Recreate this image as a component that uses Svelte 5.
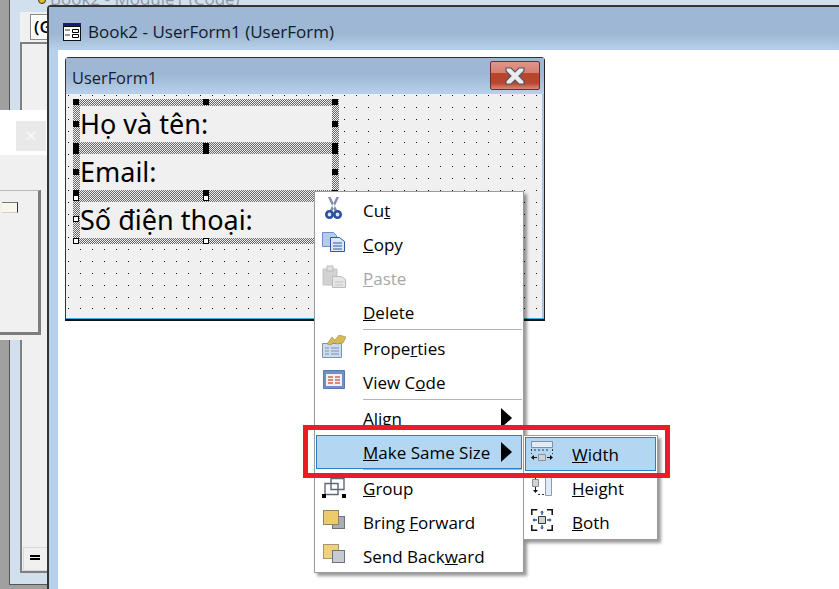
<script>
    const menuFont = 17;
    const dotRows = Array.from({ length: 19 }, (_, i) => Math.round(i * 11.86));

    // selection handles on the three labels, last selected one is hollow
    const handles = [
        [73, 99, 0], [203, 99, 0], [332, 99, 0],
        [73, 121, 0], [332, 121, 0],
        [73, 143, 0], [203, 143, 0], [332, 143, 0],
        [73, 148, 0], [203, 148, 0], [332, 148, 0],
        [73, 169, 0], [332, 169, 0],
        [73, 190, 0], [203, 190, 0], [332, 190, 0],
        [73, 195, 1], [203, 195, 1],
        [73, 216, 1],
        [73, 238, 1], [203, 238, 1]
    ];

    const topItems = [
        { icon: 'cut', before: 'Cu', key: 't', after: '' },
        { icon: 'copy', before: '', key: 'C', after: 'opy' },
        { icon: 'paste', before: '', key: 'P', after: 'aste', off: true },
        { icon: '', before: '', key: 'D', after: 'elete' }
    ];
    const midItems = [
        { icon: 'props', before: 'Prope', key: 'r', after: 'ties' },
        { icon: 'code', before: 'View C', key: 'o', after: 'de' }
    ];
    const lowItems = [
        { icon: 'group', before: '', key: 'G', after: 'roup' },
        { icon: 'forward', before: 'Bring ', key: 'F', after: 'orward' },
        { icon: 'backward', before: 'Send Back', key: 'w', after: 'ard' }
    ];
    const subItems = [
        { icon: 'width', before: '', key: 'W', after: 'idth', on: true },
        { icon: 'height', before: '', key: 'H', after: 'eight' },
        { icon: 'both', before: '', key: 'B', after: 'oth' }
    ];
</script>

{#snippet icon(name)}
    <svg class="icon" width="24" height="24" viewBox="0 0 24 24">
        {#if name === 'cut'}
            <path d="M6 0h2.500l7 14h-3zM17 0h-2.500l-7 14h3z" fill="#7f8da6" />
            <circle cx="7.500" cy="17.500" r="3.200" fill="#dfe6f2" stroke="#2b4fa5" stroke-width="2.600" />
            <circle cx="15.500" cy="17.500" r="3.200" fill="#dfe6f2" stroke="#2b4fa5" stroke-width="2.600" />
        {:else if name === 'copy'}
            <path d="M.5 1.500h11l3 3v11H.5z" fill="#b5ccec" stroke="#6a90c8" />
            <path d="M8.500 6.500h9l5 4v10h-14z" fill="#dbe7f6" stroke="#2c5aa0" />
            <path d="M11 12h9M11 15h9M11 18h9" stroke="#2f5da8" />
        {:else if name === 'paste'}
            <path d="M1 4h14v16H1z" fill="#d2d2d2" stroke="#c4c4c4" />
            <path d="M5 1h6v5H5z" fill="#e0e0e0" stroke="#bbb" />
            <path d="M10.500 11.500h9l4 3v8h-13z" fill="#e6e6e6" stroke="#bcbcbc" />
            <path d="M13 17h8M13 20h8" stroke="#c4c4c4" />
        {:else if name === 'props'}
            <path d="M.5 8.500h19v14H.5z" fill="#cfdcee" stroke="#7d93b8" />
            <path d="M3 13h4M9 13h8M3 16h4M9 16h8M3 19h4M9 19h8" stroke="#7a90b4" />
            <path d="M5 9l5-7 3 3 4-5 7 2-3 6-6 1-3-2-3 3z" fill="#d7bb52" stroke="#8e8a55" stroke-width=".6" />
        {:else if name === 'code'}
            <path d="M1.500 1.500h21v18h-21z" fill="#6f90c4" stroke="#5a78aa" />
            <path d="M4 5h16v12H4z" fill="#edf1f7" />
            <path d="M6 8h5M13 8h5M6 11h5M13 11h5M6 14h5M13 14h5" stroke="#d8654a" stroke-width="1.600" />
        {:else if name === 'group'}
            <path d="M3 8.500h13v11H3zM9 3.500h13v11H9z" fill="none" stroke="#5e6874" stroke-width="1.400" />
            <path d="M0 19h4v4H0zM20 19h4v4h-4z" fill="#000" />
        {:else if name === 'forward'}
            <rect x="10.500" y="7.500" width="12" height="12" fill="#a8adb6" stroke="#6d737c" />
            <rect x="1.500" y="1.500" width="15" height="14" fill="#eecb6a" stroke="#8d8466" />
        {:else if name === 'backward'}
            <rect x="1.500" y="1.500" width="15" height="14" fill="#f0d27c" stroke="#a39776" />
            <rect x="10.500" y="7.500" width="12" height="12" fill="#c6cad1" stroke="#6d737c" />
        {:else if name === 'width'}
            <path d="M.5 .5h21v6H.5z" fill="#e2eaf5" stroke="#7f8ea3" />
            <path d="M.5 8v5M21.500 8v5M3 9h16" stroke="#333" stroke-dasharray="2 2" fill="none" />
            <path d="M7.500 13.500h7v6h-7z" fill="#cfd2d6" stroke="#8b8f96" />
            <path d="M2 16.500h4M20 16.500h-4" stroke="#111" />
            <path d="M0 16.500l3-2.500v5zM22 16.500l-3-2.500v5z" fill="#111" />
        {:else if name === 'height'}
            <path d="M14.500 .5h6v20h-6z" fill="#e2eaf5" stroke="#8d9cb2" />
            <path d="M1.500 4.500h6v7h-6z" fill="#cfd2d6" stroke="#8b8f96" />
            <path d="M4.500 0v4M4.500 12v5" stroke="#111" />
            <path d="M2 15l2.500 3 2.500-3z" fill="#111" />
            <path d="M7 19.500h6" stroke="#333" stroke-dasharray="2 2" />
        {:else if name === 'both'}
            <path d="M.8 6V.8h5.500M16 .8h5.200V6M21.200 16v5.200H16M6.300 21.200H.8V16" fill="none" stroke="#111" stroke-width="1.500" />
            <path d="M7.500 7.500h7v7h-7z" fill="#cfd2d6" stroke="#333" />
            <path d="M11 3v3M11 16v3M3 11h3M16 11h3" stroke="#2d4f9e" stroke-width="1.400" />
            <path d="M9 3.500l2-2 2 2zM9 18.500l2 2 2-2zM3.500 9l-2 2 2 2zM18.500 9l2 2-2 2z" fill="#2d4f9e" />
        {/if}
    </svg>
{/snippet}

{#snippet row(item)}
    <div class="row" class:off={item.off} class:on={item.on}>
        <span class="cell">{#if item.icon}{@render icon(item.icon)}{/if}</span>
        <span class="text">{item.before}<u>{item.key}</u>{item.after}</span>
    </div>
{/snippet}

<div class="screen" style="--menu-font: {menuFont}px">
    <!-- window behind -->
    <div class="back">
        <div class="back-title">
            <span class="bulb"></span>
            <span>Book2 - Module1 (Code)</span>
        </div>
        <div class="code">
            <div class="combo">(G</div>
            <div class="code-body">
                <div class="split"><span></span><span></span></div>
            </div>
        </div>
    </div>

    <!-- dialog behind the designer -->
    <div class="dialog">
        <div class="dialog-head"><span class="dialog-close">×</span></div>
        <div class="dialog-body">
            <div class="dialog-box"><span class="tab"></span></div>
        </div>
    </div>

    <!-- designer window -->
    <div class="designer">
        <div class="designer-title">
            <svg class="form-icon" width="18" height="18" viewBox="0 0 18 18">
                <rect width="18" height="18" fill="#111" />
                <rect x="1" y="4" width="16" height="13" fill="#fff" />
                <rect width="18" height="3" fill="#1a1a80" />
                <path d="M2 6h5v2H2zM2 11h5v2H2z" fill="#999" />
                <path d="M9.500 6.500h6v3h-6zM9.500 11.500h6v3h-6z" fill="#fff" stroke="#000" />
            </svg>
            <span>Book2 - UserForm1 (UserForm)</span>
        </div>
        <div class="designer-body">
            <div class="form">
                <div class="form-title">
                    <span>UserForm1</span>
                    <span class="close">
                        <svg width="22" height="18" viewBox="0 0 22 18">
                            <path d="M2 1h5l4 4 4-4h5v3l-5 5 5 5v3h-5l-4-4-4 4H2v-3l5-5-5-5z" fill="#ececec" stroke="#50586a" stroke-width="1.2" />
                        </svg>
                    </span>
                </div>
                <div class="form-body">
                    {#each dotRows as y}
                        <div class="dots" style="top: {y + 1}px"></div>
                    {/each}
                    <div class="labels">
                        <div class="label">Họ và tên:</div>
                        <div class="label">Email:</div>
                        <div class="label">Số điện thoại:</div>
                    </div>
                </div>
            </div>
        </div>
    </div>

    {#each handles as [x, y, hollow]}
        <span class="handle" class:hollow={hollow} style="left: {x}px; top: {y}px"></span>
    {/each}

    <!-- context menu -->
    <div class="menu">
        {#each topItems as item}{@render row(item)}{/each}
        <div class="sep"></div>
        {#each midItems as item}{@render row(item)}{/each}
        <div class="sep"></div>
        <div class="row">
            <span class="cell"></span>
            <span class="text">Align</span>
            <span class="arrow"></span>
        </div>
        <div class="row on">
            <span class="cell"></span>
            <span class="text"><u>M</u>ake Same Size</span>
            <span class="arrow"></span>
        </div>
        <div class="sep"></div>
        {#each lowItems as item}{@render row(item)}{/each}
    </div>

    <div class="menu sub">
        {#each subItems as item}{@render row(item)}{/each}
    </div>

    <div class="callout"></div>
</div>

<style>
    :global(body) {
        margin: 0;
        background: #a0a0a0;
    }

    .screen {
        position: relative;
        width: 839px;
        height: 589px;
        overflow: hidden;
        background: #a0a0a0;
        font-family: "Open Sans", "Noto Sans", sans-serif;
        color: #000;
    }

    /* window behind */
    .back {
        position: absolute;
        left: 9px;
        top: -10px;
        width: 840px;
        height: 595px;
        box-sizing: border-box;
        border-left: 1px solid #555;
        border-bottom: 1px solid #555;
        background: #d2dfec;
        padding: 0 0 11px 10px;
        display: flex;
        flex-direction: column;
    }

    .back-title {
        height: 16px;
        margin-bottom: 6px;
        flex: none;
        display: flex;
        align-items: center;
        gap: 4px;
        padding-left: 18px;
        font-size: 17px;
        color: #8f99a5;
        white-space: nowrap;
    }

    .bulb {
        width: 8px;
        height: 8px;
        margin-top: 3px;
        box-sizing: border-box;
        background: #e0c020;
        border-radius: 50%;
        border: 1px solid #333;
        flex: none;
    }

    .code {
        flex: 1;
        background: #f0f0f0;
        display: flex;
        flex-direction: column;
        min-height: 0;
    }

    .combo {
        margin: 2px 0 2px 10px;
        height: 26px;
        box-sizing: border-box;
        border: 1px solid #8a8a8a;
        background: #fff;
        font-size: 17px;
        font-weight: 600;
        padding-left: 3px;
        line-height: 24px;
    }

    .code-body {
        flex: 1;
        border-left: 2px solid #808080;
        border-top: 2px solid #808080;
        border-bottom: 2px solid #808080;
        display: flex;
        align-items: flex-end;
    }

    .split {
        width: 25px;
        height: 24px;
        margin-left: 1px;
        box-sizing: border-box;
        border: 1px solid #d8d8d8;
        display: flex;
        flex-direction: column;
        gap: 1px;
        padding: 7px 0 0 6px;
    }

    .split span {
        display: block;
        width: 10px;
        height: 2px;
        background: #000;
    }

    /* dialog */
    .dialog {
        position: absolute;
        left: -20px;
        top: 110px;
        width: 67px;
        height: 230px;
        background: #f0f0f0;
        display: flex;
        flex-direction: column;
    }

    .dialog-head {
        height: 45px;
        background: #fff;
        display: flex;
        justify-content: flex-end;
        padding: 11px 1px 0 0;
        box-sizing: border-box;
    }

    .dialog-close {
        width: 30px;
        height: 30px;
        background: #e9e9e9;
        color: #fafafa;
        text-align: center;
        line-height: 30px;
        font-size: 20px;
    }

    .dialog-body {
        padding: 35px 6px 5px 0;
        flex: 1;
        display: flex;
    }

    .dialog-box {
        flex: 1;
        box-sizing: border-box;
        border: 3px solid #7d7d7d;
        border-top: 1px solid #b8b8b8;
        border-left: 0;
        padding-top: 11px;
        display: flex;
        justify-content: flex-end;
        padding-right: 20px;
    }

    .tab {
        width: 16px;
        height: 11px;
        background: #f8f6ea;
        border-top: 1px solid #777;
        border-right: 1px solid #333;
        border-bottom: 1px solid #d0d0d0;
        box-sizing: border-box;
    }

    /* designer */
    .designer {
        position: absolute;
        left: 47px;
        top: 5px;
        width: 800px;
        height: 600px;
        box-sizing: border-box;
        border: 2px solid #333;
        border-right: 0;
        border-bottom: 0;
        border-top-left-radius: 4px;
        background: #b7d1ea;
        display: flex;
        flex-direction: column;
    }

    .designer-title {
        height: 43px;
        flex: none;
        background: linear-gradient(#9db7d4 0, #9db7d4 62%, #b7d1ea 100%);
        display: flex;
        align-items: center;
        gap: 7px;
        padding: 6px 0 0 14px;
        box-sizing: border-box;
        font-size: 17px;
        color: #111b2c;
    }

    .designer-body {
        flex: 1;
        margin-left: 9px;
        background: #fff;
        padding: 7px 0 0 7px;
    }

    .form {
        width: 480px;
        height: 264px;
        box-sizing: border-box;
        border: 1px solid #333;
        border-bottom: 2px solid #111;
        border-right: 1px solid #222;
        border-radius: 4px 4px 0 0;
        display: flex;
        flex-direction: column;
        background: #9db7d4;
        box-shadow: inset 0 -1px 0 #38b4dc, inset -2px 0 0 #a9c6e4;
    }

    .form-title {
        height: 36px;
        flex: none;
        background: linear-gradient(#9db7d4 0, #9db7d4 45%, #b7d1ea 100%);
        display: flex;
        align-items: center;
        justify-content: space-between;
        padding: 2px 4px 0 6px;
        box-sizing: border-box;
        font-size: 16.400px;
        color: #15202f;
    }

    .close {
        width: 50px;
        height: 29px;
        box-sizing: border-box;
        border: 1px solid #6b2c34;
        border-radius: 2px;
        background: linear-gradient(#e0948a 0, #d97f72 40%, #b8462c 42%, #b8462c 78%, #d98878 100%);
        display: flex;
        align-items: center;
        justify-content: center;
        margin-bottom: 3px;
    }

    .form-body {
        position: relative;
        flex: 1;
        background: #f0f0f0;
        margin-right: 2px;
        margin-bottom: 1px;
    }

    .dots {
        position: absolute;
        left: 2px;
        right: 0;
        height: 1px;
        background: repeating-linear-gradient(90deg, #111 0 1px, transparent 1px 12px);
    }

    .labels {
        position: absolute;
        left: 7px;
        top: 5px;
        width: 266px;
        box-sizing: border-box;
        display: flex;
        flex-direction: column;
        background-color: #f0f0f0;
        background-image: conic-gradient(#666 25%, #f0f0f0 0 50%, #666 0 75%, #f0f0f0 0);
        background-size: 2px 2px;
        padding: 7px 7px 6px;
        gap: 12px;
    }

    .label {
        height: 36px;
        background: #f0f0f0;
        font-size: 27px;
        line-height: 36px;
        font-family: "Noto Sans", sans-serif;
        white-space: nowrap;
    }

    .handle {
        position: absolute;
        width: 6px;
        height: 6px;
        background: #000;
    }

    .handle.hollow {
        box-sizing: border-box;
        background: #fff;
        border: 1px solid #000;
    }

    /* context menu */
    .menu {
        position: absolute;
        left: 314px;
        top: 191px;
        width: 210px;
        height: 382px;
        box-sizing: border-box;
        background: #fff;
        border: 1px solid #9a9a9a;
        padding: 1px 1px 0;
        box-shadow: 3px 3px 3px rgba(0, 0, 0, 0.4);
        font-size: var(--menu-font);
    }

    .sub {
        left: 523px;
        top: 435px;
        width: 135px;
        height: 105px;
    }

    .row {
        height: 34px;
        box-sizing: border-box;
        display: flex;
        align-items: center;
        padding-top: 1px;
        border: 1px solid transparent;
    }

    .row.on {
        background: #b3d7f3;
        border-color: #2a80c8;
    }

    .row.off {
        color: #a8a8a8;
    }

    .cell {
        width: 46px;
        flex: none;
        display: flex;
        margin-top: -4px;
        padding-left: 5px;
        box-sizing: border-box;
    }

    .icon {
        display: block;
    }

    .text {
        flex: 1;
        white-space: nowrap;
    }

    .arrow {
        width: 0;
        height: 0;
        margin: -1px 9px 0 0;
        border-left: 11px solid #000;
        border-top: 10px solid transparent;
        border-bottom: 10px solid transparent;
    }

    .sep {
        height: 2px;
        margin-left: 47px;
        border-top: 1px solid #b4b4b4;
        box-sizing: border-box;
    }

    .callout {
        position: absolute;
        left: 303px;
        top: 425px;
        width: 367px;
        height: 53px;
        box-sizing: border-box;
        border: 5px solid #ed1c24;
    }
</style>
